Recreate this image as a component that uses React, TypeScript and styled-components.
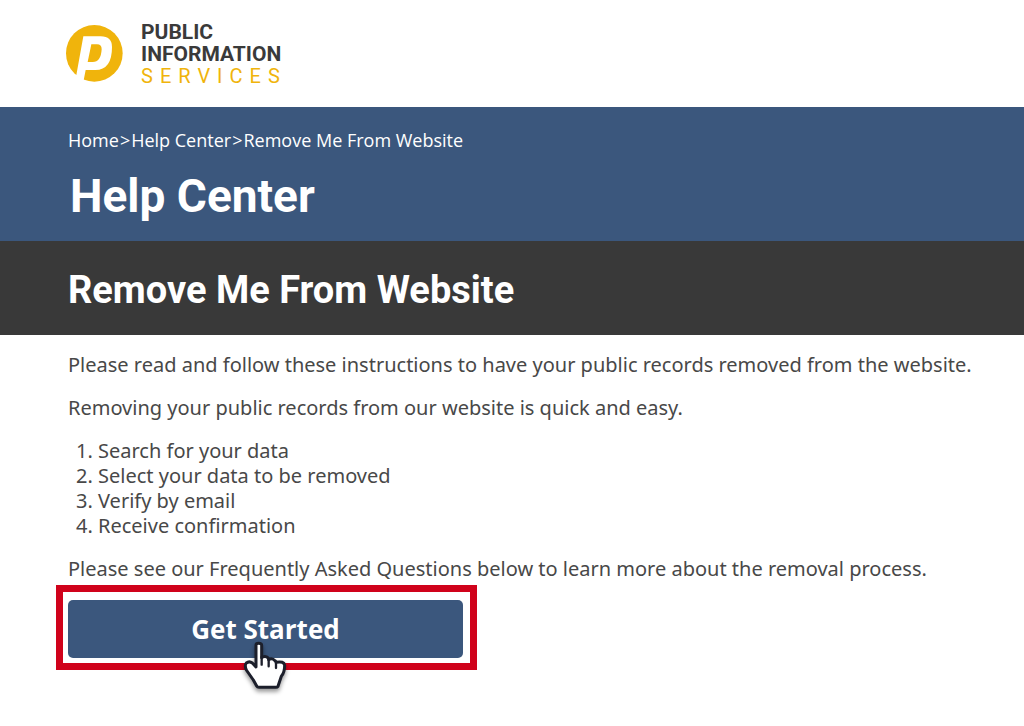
import React from "react";
import styled, { createGlobalStyle } from "styled-components";

const GlobalStyle = createGlobalStyle`
  *, *::before, *::after { box-sizing: border-box; }
  body {
    margin: 0;
    background: #fff;
    color: #484848;
    font-family: "Noto Sans", "Open Sans", sans-serif;
    font-size: 20px;
    line-height: 25px;
  }
`;

const Header = styled.header`
  display: flex;
  align-items: center;
  height: 107px;
  padding: 0 66px;
`;

const Brand = styled.a`
  display: flex;
  align-items: center;
  gap: 18px;
  color: #3a3a3a;
  text-decoration: none;
`;

const BrandText = styled.span`
  display: flex;
  flex-direction: column;
  font-family: Roboto, sans-serif;
  font-size: 21px;
  font-weight: 700;
  line-height: 22px;
`;

const BrandAccent = styled.span`
  color: #f0b40c;
  font-size: 20px;
  font-weight: 400;
  letter-spacing: 7px;
`;

const Banner = styled.section`
  height: 134px;
  padding: 21px 68px 0;
  background: #3b577d;
  color: #fff;
`;

const Breadcrumbs = styled.nav`
  display: flex;
  gap: 1px;
  font-family: "Open Sans", sans-serif;
  font-size: 18px;
`;

const Crumb = styled.a`
  color: inherit;
  text-decoration: none;
`;

const BannerTitle = styled.h1`
  margin: 13px 0 0;
  padding-left: 2px;
  font-family: Roboto, sans-serif;
  font-size: 46px;
  line-height: 60px;
`;

const TitleBar = styled.section`
  display: flex;
  align-items: center;
  height: 94px;
  padding: 4px 68px 0;
  background: #393939;
  color: #fff;
`;

const PageTitle = styled.h2`
  margin: 0;
  font-family: Roboto, sans-serif;
  font-size: 38px;
  line-height: 48px;
`;

const Content = styled.main`
  padding: 17px 24px 40px 68px;
`;

const Paragraph = styled.p`
  margin: 0 0 18px;
`;

const Steps = styled.ol`
  margin: 0 0 18px;
  padding-left: 30px;
`;

const Highlight = styled.div`
  position: relative;
  width: 421px;
  max-width: 100%;
  margin: -14px 0 0 -12px;
  padding: 8px 7px 5px 5px;
  border: 7px solid #d0021b;
`;

const StartButton = styled.button`
  display: block;
  width: 100%;
  height: 58px;
  padding: 0;
  border: 0;
  border-radius: 5px;
  background: #3b577d;
  color: #fff;
  font: 700 26px/58px "Open Sans", sans-serif;
  cursor: pointer;
`;

const Pointer = styled.svg`
  position: absolute;
  top: 43px;
  left: 172px;
  overflow: visible;
  pointer-events: none;
  filter: drop-shadow(0 3px 2px rgba(0, 0, 0, 0.4));
`;

const steps = [
  "Search for your data",
  "Select your data to be removed",
  "Verify by email",
  "Receive confirmation",
];

export default function App() {
  return (
    <>
      <GlobalStyle />
      <Header>
        <Brand href="#">
          <svg width="57" height="57" viewBox="0 0 171 171" aria-hidden="true">
            <circle cx="85" cy="85" r="85" fill="#f0b40c" />
            <path
              d="M52 34H104Q138 34 138 66Q138 135 88 135H59L52 171H24V150H31Z"
              fill="#fff"
            />
            <path
              d="M76 58H93Q107 58 107 72Q105 111 80 111H65Z"
              fill="#f0b40c"
            />
          </svg>
          <BrandText>
            <span>PUBLIC</span>
            <span>INFORMATION</span>
            <BrandAccent>SERVICES</BrandAccent>
          </BrandText>
        </Brand>
      </Header>
      <Banner>
        <Breadcrumbs aria-label="Breadcrumb">
          <Crumb href="#">Home</Crumb>
          <span>&gt;</span>
          <Crumb href="#">Help Center</Crumb>
          <span>&gt;</span>
          <Crumb href="#">Remove Me From Website</Crumb>
        </Breadcrumbs>
        <BannerTitle>Help Center</BannerTitle>
      </Banner>
      <TitleBar>
        <PageTitle>Remove Me From Website</PageTitle>
      </TitleBar>
      <Content>
        <Paragraph>
          Please read and follow these instructions to have your public records
          removed from the website.
        </Paragraph>
        <Paragraph>
          Removing your public records from our website is quick and easy.
        </Paragraph>
        <Steps>
          {steps.map((step) => (
            <li key={step}>{step}</li>
          ))}
        </Steps>
        <Paragraph>
          Please see our Frequently Asked Questions below to learn more about
          the removal process.
        </Paragraph>
        <Highlight>
          <StartButton type="button">Get Started</StartButton>
          <Pointer width="60" height="60" viewBox="0 0 180 180" aria-hidden="true">
            <path
              d="M63 96V30Q63 25 71 25Q80 25 80 31V68Q87 62 96 66Q101 70 101 74Q111 67 120 77Q123 80 123 82Q147 77 149 91Q149 113 139 124L129 154Q127 157 123 157H72Q67 157 65 153L55 135L34 105Q28 90 34 84Q43 77 52 84L63 96Z"
              fill="#fff"
              stroke="#1c1f2b"
              strokeWidth="9"
              strokeLinejoin="round"
            />
            <path
              d="M80 65V89M101 72V94M123 80V99"
              fill="none"
              stroke="#1c1f2b"
              strokeWidth="7"
              strokeLinecap="round"
            />
          </Pointer>
        </Highlight>
      </Content>
    </>
  );
}
